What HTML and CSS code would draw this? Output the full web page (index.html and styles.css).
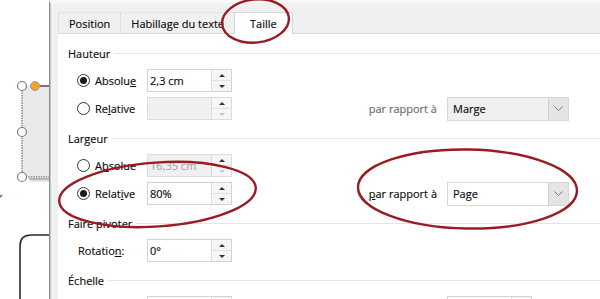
FILE: index.html
```html
<!DOCTYPE html>
<html lang="fr">
<head>
    <meta charset="UTF-8">
    <title>Disposition - Taille</title>
    <link rel="stylesheet" href="styles.css">
</head>
<body>
    <div class="screen">
        <svg class="canvas" width="49" height="299" viewBox="0 0 49 299">
            <path d="M22,86 H49 V177 H30 Q22,177 22,169 Z" fill="#e9e9e9"/>
            <path d="M29,179 H49" stroke="#b4b4b4" stroke-width="2"/>
            <path d="M30,181 H49" stroke="#dcdcdc" stroke-width="1.5"/>
            <path d="M22,90 V169 Q22,177 30,177 H49" fill="none" stroke="#555" stroke-width="1" stroke-dasharray="1.5 1"/>
            <path d="M35,86 H49" stroke="#333" stroke-width="1.3"/>
            <circle cx="22" cy="86" r="4.5" fill="#fff" stroke="#7a7a7a" stroke-width="1.2"/>
            <circle cx="35" cy="86" r="4.5" fill="#f5a51c" stroke="#a0a0a0" stroke-width="1"/>
            <circle cx="22" cy="132" r="4.5" fill="#fff" stroke="#7a7a7a" stroke-width="1.2"/>
            <circle cx="22" cy="177" r="4.5" fill="#fff" stroke="#7a7a7a" stroke-width="1.2"/>
            <path d="M0,197 L2,195" stroke="#2f5fa8" stroke-width="1.3"/>
            <path d="M49,235 H31 Q20,235 20,246 V299" fill="none" stroke="#2b2b2b" stroke-width="1.6"/>
        </svg>

        <div class="dialog">
            <div class="tabs">
                <div class="tab">Position</div>
                <div class="tab">Habillage du texte</div>
                <div class="tab active">Taille</div>
            </div>

            <div class="panel">
                <div class="group">
                    <div class="legend">Hauteur</div>
                    <div class="row">
                        <div class="opt"><span class="radio on"></span>Absolu<u>e</u></div>
                        <div class="spin">
                            <span class="val">2,3 cm</span>
                            <div class="arrows"><span class="up"></span><span class="down"></span></div>
                        </div>
                    </div>
                    <div class="row">
                        <div class="opt"><span class="radio"></span>Re<u>l</u>ative</div>
                        <div class="spin off">
                            <span class="val"></span>
                            <div class="arrows"><span class="up"></span><span class="down"></span></div>
                        </div>
                        <div class="rel off">par rapport à</div>
                        <div class="select off">
                            <span class="val">Marge</span>
                            <span class="drop"><svg width="9" height="5" viewBox="0 0 9 5"><path d="M0.5,0.5 L4.5,4.5 L8.5,0.5" fill="none" stroke="#7a7a7a" stroke-width="1"/></svg></span>
                        </div>
                    </div>
                </div>

                <div class="group">
                    <div class="legend">Largeur</div>
                    <div class="row">
                        <div class="opt"><span class="radio"></span>A<u>b</u>solue</div>
                        <div class="spin off">
                            <span class="val">16,35 cm</span>
                            <div class="arrows"><span class="up"></span><span class="down"></span></div>
                        </div>
                    </div>
                    <div class="row">
                        <div class="opt"><span class="radio on"></span>Relat<u>i</u>ve</div>
                        <div class="spin">
                            <span class="val">80%</span>
                            <div class="arrows"><span class="up"></span><span class="down"></span></div>
                        </div>
                        <div class="rel"><u>p</u>ar rapport à</div>
                        <div class="select">
                            <span class="val">Page</span>
                            <span class="drop"><svg width="9" height="5" viewBox="0 0 9 5"><path d="M0.5,0.5 L4.5,4.5 L8.5,0.5" fill="none" stroke="#7a7a7a" stroke-width="1"/></svg></span>
                        </div>
                    </div>
                </div>

                <div class="group">
                    <div class="legend">Faire pivoter</div>
                    <div class="row">
                        <div class="opt plain">Rotatio<u>n</u> :</div>
                        <div class="spin">
                            <span class="val">0°</span>
                            <div class="arrows"><span class="up"></span><span class="down"></span></div>
                        </div>
                    </div>
                </div>

                <div class="group">
                    <div class="legend">Échelle</div>
                    <div class="row">
                        <div class="opt plain"></div>
                        <div class="spin">
                            <span class="val"></span>
                            <div class="arrows"><span class="up"></span><span class="down"></span></div>
                        </div>
                        <div class="rel"></div>
                        <div class="spin">
                            <span class="val"></span>
                            <div class="arrows"><span class="up"></span><span class="down"></span></div>
                        </div>
                    </div>
                </div>
            </div>
        </div>

        <svg class="marks" width="600" height="299" viewBox="0 0 600 299">
            <ellipse cx="255.5" cy="21" rx="33.5" ry="21.5" transform="rotate(-6 255.5 21)"/>
            <ellipse cx="157.5" cy="194.5" rx="98.5" ry="32" transform="rotate(-4 157.5 194.5)"/>
            <ellipse cx="467.5" cy="189" rx="109.5" ry="39.5" transform="rotate(1 467.5 189)"/>
        </svg>
    </div>
</body>
</html>
```

FILE: styles.css
```css
body {
    margin: 0;
    font-family: 'Open Sans', 'Noto Sans', sans-serif;
    font-size: 11px;
    color: #0a0a0a;
    -webkit-text-stroke: 0.15px currentColor;
    background: #fff;
    overflow: hidden;
}
.screen {
    position: relative;
    display: flex;
    width: 600px;
    height: 299px;
    overflow: hidden;
}
.canvas {
    flex: none;
    display: block;
}
.dialog {
    flex: 1;
    display: flex;
    flex-direction: column;
    background: #f0f0f0;
    border-left: 1px solid #8e8e8e;
    box-shadow: inset 1px 0 #c6c6c6;
    border-top: 3px solid #f8f8f8;
    padding-left: 8px;
}
.tabs {
    flex: none;
    height: 30px;
    display: flex;
    align-items: flex-end;
}
.tab {
    height: 21px;
    line-height: 21px;
    padding: 0 10px;
    border-top: 1px solid #e6e6e6;
    border-left: 1px solid #dedede;
    box-sizing: border-box;
    white-space: nowrap;
}
.tab.active {
    position: relative;
    height: 22px;
    margin-bottom: -1px;
    padding: 0 15px;
    background: #fff;
    border: 1px solid #d6d6d6;
    border-bottom: none;
}
.panel {
    flex: none;
    background: #fff;
    border-top: 1px solid #dadada;
    padding: 11px 0 0 10px;
}
.group {
    margin-bottom: 10px;
}
.legend {
    display: flex;
    align-items: center;
    height: 16px;
}
.legend::after {
    content: '';
    flex: 1;
    height: 1px;
    background: #e4e4e4;
    margin-left: 4px;
}
.row {
    display: flex;
    align-items: center;
    height: 23px;
    margin-top: 5px;
    padding-left: 9px;
}
.legend + .row {
    margin-top: 8px;
}
.opt {
    width: 70px;
    display: flex;
    align-items: center;
    white-space: nowrap;
}
.opt.plain {
    padding-left: 1px;
    box-sizing: border-box;
}
.radio {
    width: 13px;
    height: 13px;
    border: 1px solid #333;
    border-radius: 50%;
    box-sizing: border-box;
    margin-right: 5px;
    display: flex;
    align-items: center;
    justify-content: center;
    background: #fff;
}
.radio.on::after {
    content: '';
    width: 7px;
    height: 7px;
    border-radius: 50%;
    background: #1a1a1a;
}
.spin {
    width: 85px;
    height: 23px;
    box-sizing: border-box;
    border: 1px solid #d3d3d3;
    display: flex;
    background: #fff;
}
.spin .val, .select .val {
    flex: 1;
    padding-left: 2px;
    line-height: 21px;
    white-space: nowrap;
    overflow: hidden;
}
.spin.off {
    background: #f0f0f0;
    border-color: #dcdcdc;
}
.spin.off .val {
    color: #a8a8a8;
}
.arrows {
    width: 19px;
    display: flex;
    flex-direction: column;
    border-left: 1px solid #dcdcdc;
    background: #f6f6f6;
}
.arrows span {
    flex: 1;
    display: flex;
    align-items: center;
    justify-content: center;
}
.arrows .up {
    border-bottom: 1px solid #e2e2e2;
}
.arrows .up::after {
    content: '';
    border: 3px solid transparent;
    border-top: none;
    border-bottom: 3px solid #333;
}
.arrows .down::after {
    content: '';
    border: 3px solid transparent;
    border-bottom: none;
    border-top: 3px solid #333;
}
.spin.off .arrows .down::after {
    border-top-color: #c8c8c8;
}
.rel {
    width: 215px;
    padding-right: 10px;
    box-sizing: border-box;
    text-align: right;
    white-space: nowrap;
}
.rel.off {
    color: #6a6a6a;
}
.select {
    width: 122px;
    height: 24px;
    box-sizing: border-box;
    border: 1px solid #d6d6d6;
    display: flex;
    background: #fff;
}
.select .val {
    padding-left: 5px;
    line-height: 22px;
}
.select.off {
    background: #f0f0f0;
}
.drop {
    width: 19px;
    background: #e4e4e4;
    border-left: 1px solid #cfcfcf;
    display: flex;
    align-items: center;
    justify-content: center;
}
.marks {
    position: absolute;
    left: 0;
    top: 0;
    pointer-events: none;
}
.marks ellipse {
    fill: none;
    stroke: #9a1c22;
    stroke-width: 2.4;
}
```
